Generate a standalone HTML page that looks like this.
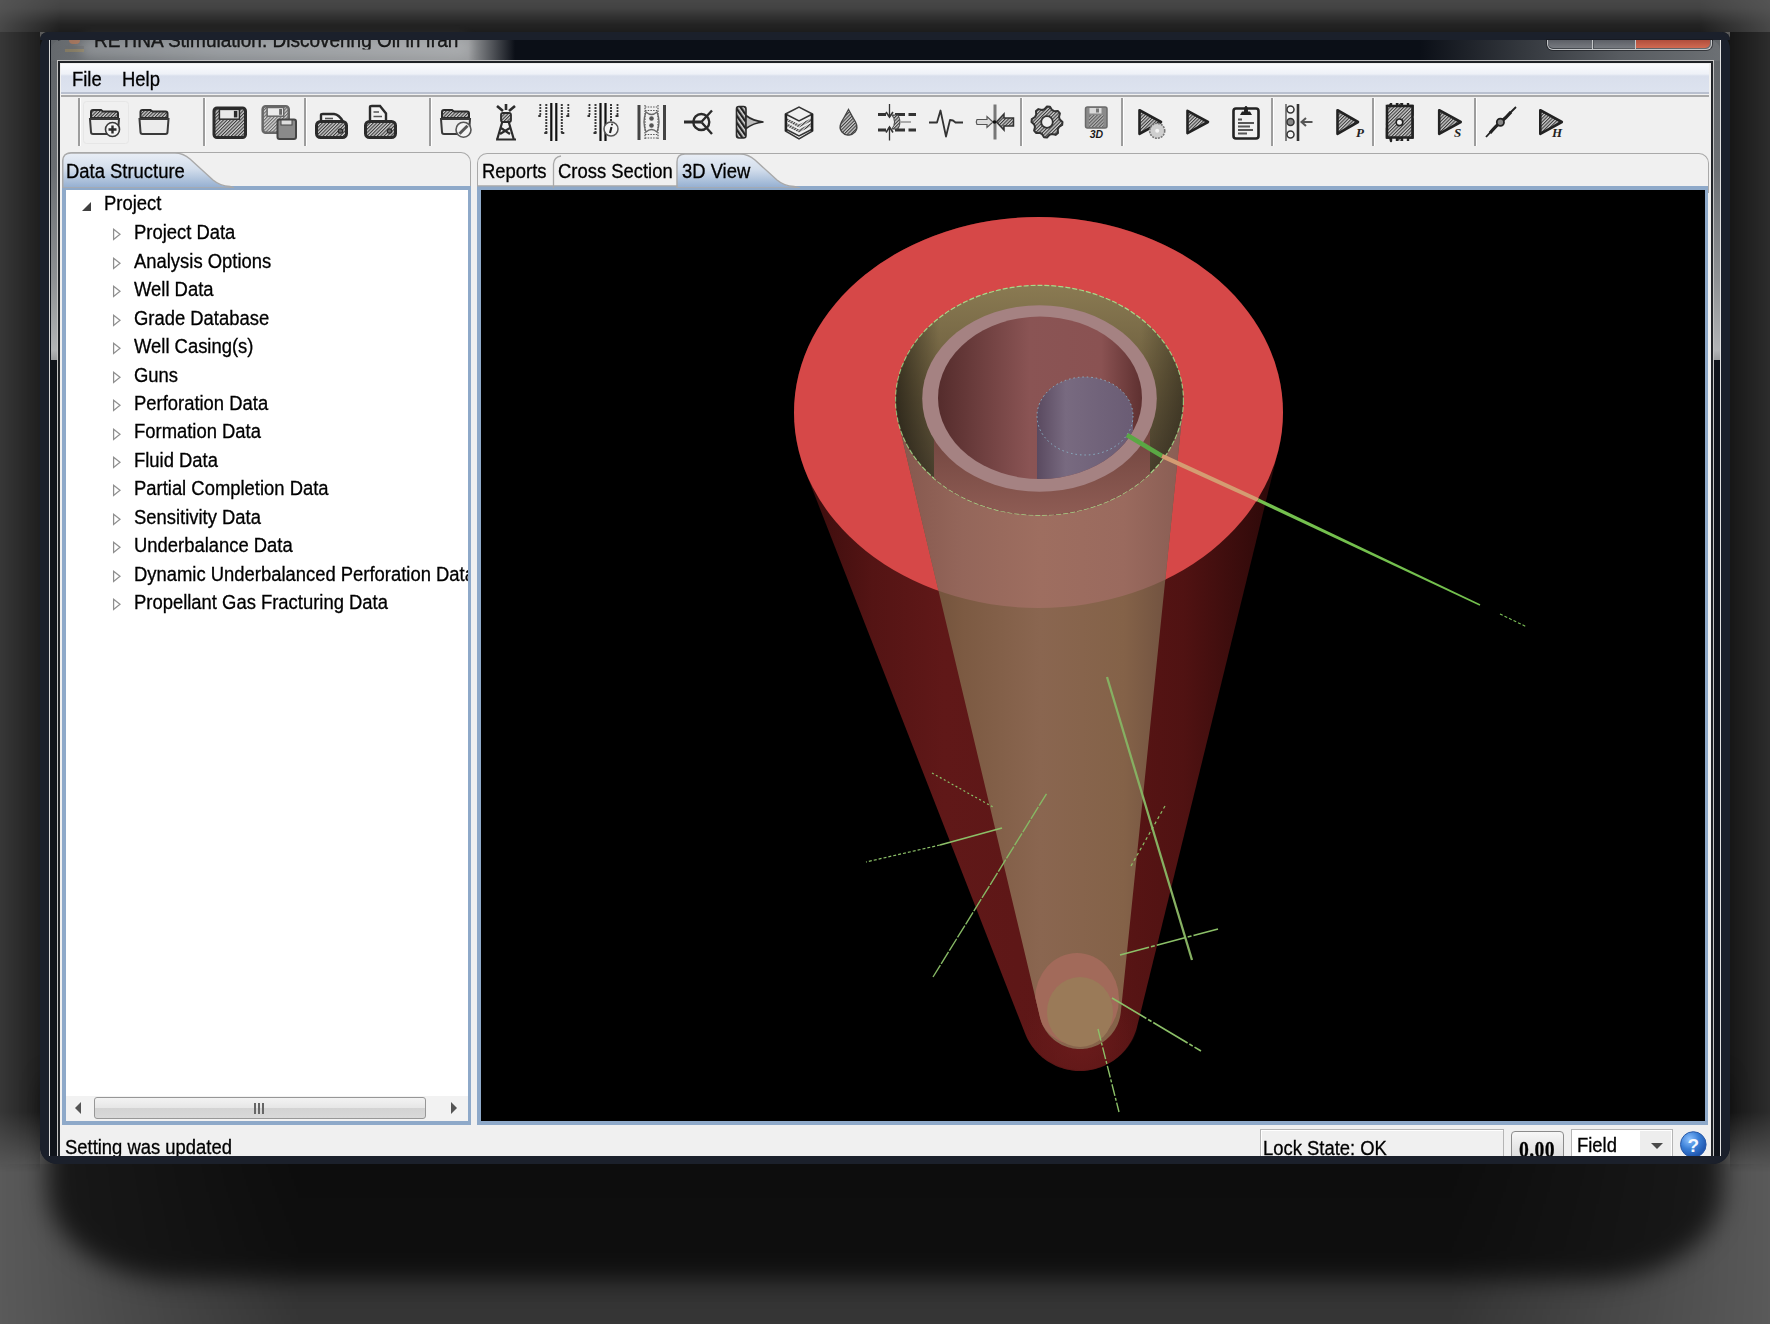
<!DOCTYPE html>
<html><head><meta charset="utf-8">
<style>
*{margin:0;padding:0;box-sizing:border-box}
html,body{width:1770px;height:1324px;overflow:hidden}
body{background:#5a5a5a;font-family:"Liberation Sans",sans-serif;position:relative}
.a{position:absolute}
#shadow{left:40px;top:32px;width:1690px;height:1132px;border-radius:8px 8px 20px 20px;background:#141414}
#shadow2{left:48px;top:1080px;width:1674px;height:200px;border-radius:0 0 130px 130px/0 0 90px 90px;background:rgba(0,0,0,.7);filter:blur(12px)}
#stop{left:0;top:0;width:1770px;height:32px;background:linear-gradient(180deg,rgba(0,0,0,.2) 0,rgba(0,0,0,.25) 8px,rgba(0,0,0,.6) 24px,rgba(0,0,0,.68) 32px);-webkit-mask-image:linear-gradient(90deg,rgba(0,0,0,.3) 0,#000 60px,#000 1700px,rgba(0,0,0,.3) 1770px)}
#sleft{left:0;top:32px;width:40px;height:1140px;background:linear-gradient(90deg,rgba(0,0,0,.38),rgba(0,0,0,.66));-webkit-mask-image:linear-gradient(180deg,#000 1080px,transparent 1140px)}
#sright{left:1730px;top:32px;width:40px;height:1140px;background:linear-gradient(270deg,rgba(0,0,0,.5),rgba(0,0,0,.75));-webkit-mask-image:linear-gradient(180deg,#000 1080px,transparent 1140px)}
#stail{left:0;top:1164px;width:1770px;height:160px;background:linear-gradient(180deg,rgba(0,0,0,.5),rgba(0,0,0,.4));-webkit-mask-image:linear-gradient(90deg,transparent 0,#000 300px,#000 1450px,transparent 1770px)}
#win{left:40px;top:32px;width:1690px;height:1132px;background:#1b202b;border-radius:17px;overflow:hidden}
#frame{left:49px;top:40px;width:1672px;height:1116px;background:#10141b;border-left:1.5px solid #d8d8d8;border-right:1.5px solid #e0e0e0}
#tbdark{left:460px;top:40px;width:1120px;height:21px;background:linear-gradient(90deg,rgba(11,15,23,0),#0b0f17 5%,#0b0f17 78%,rgba(11,15,23,0))}
#titleglow{left:80px;top:38px;width:390px;height:20px;border-radius:10px;background:rgba(200,202,205,.35);filter:blur(6px)}
#client{left:58px;top:61px;width:1655px;height:1095px;background:#f0f0f0;border:2px solid #202327;border-bottom:none;box-shadow:0 0 0 1px #c4c4c4}
.t{position:absolute;font-size:19.4px;color:#000;white-space:pre;line-height:1;transform:scaleX(.95);transform-origin:0 0;-webkit-text-stroke:.3px #000}
#menubar{left:61px;top:64px;width:1648px;height:30px;background:linear-gradient(180deg,#fbfcfe 0,#eef1f7 10px,#d9dfec 12px,#dde3ef 28px,#b9c0cf 28px,#b9c0cf 30px)}
#menuline{left:61px;top:95px;width:1648px;height:2px;background:#a9a9a9}
.sep{position:absolute;top:98px;width:2px;height:48px;background:#9d9d9d;box-shadow:1px 0 0 #fff}
.tabstrip{position:absolute;border:1.5px solid #a9a9a9;border-bottom:none;border-radius:10px 10px 0 0;background:#f0f0f0}
.blue{position:absolute;background:#8ea9c9}
#tree{left:65.5px;top:190px;width:402.5px;height:906px;background:#fff}
#hscroll{left:65.5px;top:1096px;width:402.5px;height:25px;background:#f2f2f2}
#thumb{left:94px;top:1097px;width:332px;height:22px;border:1px solid #979797;border-radius:3px;background:linear-gradient(180deg,#f3f3f3,#e6e6e6 50%,#d3d3d3 52%,#d9d9d9)}
#view{left:481px;top:190px;width:1224px;height:931px;background:#000;overflow:hidden}
.tri{position:absolute;width:0;height:0}
</style></head><body>
<div id="stop" class="a"></div><div id="sleft" class="a"></div><div id="sright" class="a"></div><div id="stail" class="a"></div><div id="shadow" class="a"></div><div id="shadow2" class="a"></div>
<div id="win" class="a"></div>
<div id="frame" class="a"></div>
<div class="a" style="left:50.5px;top:40px;width:7.5px;height:320px;background:linear-gradient(180deg,#606468,#6a6e72 40%,#8e9194 75%,#b2b4b6 97%,#9a9c9e)"></div>
<div class="a" style="left:1713px;top:40px;width:6.5px;height:320px;background:linear-gradient(180deg,#606468,#6a6e72 40%,#8e9194 75%,#b2b4b6 97%,#9a9c9e)"></div>
<div class="a" style="left:50.5px;top:40px;width:1669px;height:21px;background:linear-gradient(90deg,#65696d,#84888c 10%,#9a9c9e 25%,#0b0f17 27.8%,#0b0f17 82%,#33373d 88%,#575b60 94%,#6c7074);border-radius:10px 10px 0 0"></div>

<div id="titleglow" class="a"></div>
<div class="t" style="left:94px;top:29.5px;font-size:20px;color:#1a1a1a;clip-path:inset(10.5px 0 0 0)">RETINA Stimulation: Discovering Oil in Iran</div>
<div class="a" style="left:69px;top:40px;width:11px;height:4px;background:#d87a48;border-radius:0 0 4px 4px;opacity:.5"></div>
<div class="a" style="left:65px;top:46px;width:19px;height:3px;background:#6a6a6a;opacity:.35"></div>
<div class="a" style="left:65px;top:49px;width:19px;height:3px;background:#b8954a;opacity:.35"></div>
<div class="a" style="left:40px;top:32px;width:1690px;height:8px;background:#1b202b;border-radius:17px 17px 0 0"></div>
<!-- caption buttons -->
<div class="a" style="left:1546.5px;top:39.5px;width:165px;height:10px;border:1.3px solid #c4c6c8;border-top:none;border-radius:0 0 6px 6px;box-shadow:0 0 0 1px rgba(20,22,26,.6)"></div>
<div class="a" style="left:1548px;top:39.5px;width:44px;height:8px;background:linear-gradient(#5c5f66,#777a80);border-radius:0 0 0 5px"></div>
<div class="a" style="left:1593.5px;top:39.5px;width:41px;height:8px;background:linear-gradient(#5c5f66,#777a80)"></div>
<div class="a" style="left:1592.3px;top:39.5px;width:1.2px;height:9px;background:#c4c6c8"></div>
<div class="a" style="left:1634.5px;top:39.5px;width:1.2px;height:9px;background:#c4c6c8"></div>
<div class="a" style="left:1635.7px;top:39.5px;width:74.5px;height:8px;background:linear-gradient(#b04e3c,#d06a52);border-radius:0 0 5px 0"></div>
<div id="client" class="a"></div>
<div id="menubar" class="a"></div>
<div id="menuline" class="a"></div>
<div class="t" style="left:71.5px;top:69.8px">File</div>
<div class="t" style="left:122px;top:69.8px">Help</div>

<!-- toolbar separators -->
<div class="sep" style="left:78px"></div>
<div class="sep" style="left:203px"></div>
<div class="sep" style="left:304px"></div>
<div class="sep" style="left:429px"></div>
<div class="sep" style="left:1020px"></div>
<div class="sep" style="left:1121px"></div>
<div class="sep" style="left:1271px"></div>
<div class="sep" style="left:1372px"></div>
<div class="sep" style="left:1474px"></div>

<!--ICONS--><svg class="a" style="left:61px;top:97px" width="1648" height="55" viewBox="61 97 1648 55">
<defs>
<pattern id="hatch" patternUnits="userSpaceOnUse" width="2.4" height="2.4" patternTransform="rotate(45)"><rect width="2.4" height="2.4" fill="#cfcfcf"/><rect width="1.1" height="2.4" fill="#3a3a3a"/></pattern>
<pattern id="hatch2" patternUnits="userSpaceOnUse" width="4" height="4" patternTransform="rotate(-35)"><rect width="4" height="4" fill="#ddd"/><rect width="2.4" height="4" fill="#222"/></pattern>
</defs>
<rect x="83.5" y="101.5" width="45" height="42" rx="3" fill="none" stroke="#e6e6e6" stroke-width="1"/>
<path d="M91 118 L91 112 Q91 110 93 110 L101 110 L103 111.5 L116 111.5 Q118 111.5 118 113.5 L118 118 Z" fill="url(#hatch)" stroke="#2b2b2b" stroke-width="2"/>
<path d="M90 119 L119 119 L118 132 Q118 134 116 134 L93 134 Q91 134 91 132 Z" fill="#ececec" stroke="#3a3a3a" stroke-width="2"/><circle cx="112.5" cy="129.5" r="7" fill="#f4f4f4" stroke="#3a3a3a" stroke-width="1.6"/><path d="M108.5 129.5 H116.5 M112.5 125.5 V133.5" stroke="#2b2b2b" stroke-width="2.4"/>
<path d="M140.5 118 L140.5 112 Q140.5 110 142.5 110 L150.5 110 L152.5 111.5 L165.5 111.5 Q167.5 111.5 167.5 113.5 L167.5 118 Z" fill="url(#hatch)" stroke="#2b2b2b" stroke-width="2"/>
<path d="M139.5 119 L168.5 119 L167.5 132 Q167.5 134 165.5 134 L142.5 134 Q140.5 134 140.5 132 Z" fill="#ececec" stroke="#3a3a3a" stroke-width="2"/>
<rect x="214.0" y="107.9" width="31.5" height="29.6" rx="3" fill="url(#hatch)" stroke="#2b2b2b" stroke-width="3"/>
<rect x="219.4" y="109.4" width="20.009999999999998" height="9.78" fill="#e8e8e8" stroke="#2b2b2b" stroke-width="1.5"/>
<rect x="233.89" y="110.9" width="3.45" height="6.5200000000000005" fill="#2b2b2b"/>
<g opacity=".75"><rect x="262.65" y="106.25" width="26.1" height="26.5" rx="3" fill="url(#hatch)" stroke="#3a3a3a" stroke-width="2.5"/>
<rect x="267.12" y="107.5" width="16.588" height="8.7" fill="#e8e8e8" stroke="#3a3a3a" stroke-width="1.5"/>
<rect x="279.13199999999995" y="109.0" width="2.8600000000000003" height="5.800000000000001" fill="#3a3a3a"/></g>
<rect x="277.5" y="119.5" width="18.5" height="19.5" rx="2" fill="#8a8a8a" stroke="#444" stroke-width="2"/><rect x="281" y="120" width="11" height="5" fill="#ddd" stroke="#444" stroke-width="1"/>
<path d="M321 121.5 L321 115 Q321 114 323 114 L334 114 Q339 114.5 343 121.5 Z" fill="#f2f2f2" stroke="#2b2b2b" stroke-width="2.4"/><path d="M325 118.5 H333" stroke="#555" stroke-width="1.6"/><rect x="316.5" y="121.5" width="30" height="16" rx="4" fill="url(#hatch)" stroke="#2b2b2b" stroke-width="3"/><circle cx="340.5" cy="131" r="2.2" fill="#666" stroke="#2b2b2b" stroke-width="1.2"/>
<path d="M370 121.5 L370 107 Q370 106 372 106 L380 106 L386 113.5 L386 121.5 Z" fill="#f2f2f2" stroke="#2b2b2b" stroke-width="2.4"/><path d="M373.5 112 H379 M373.5 116.5 H382" stroke="#555" stroke-width="1.6"/><rect x="365.5" y="121.5" width="30" height="16" rx="4" fill="url(#hatch)" stroke="#2b2b2b" stroke-width="3"/><circle cx="389.5" cy="131" r="2.2" fill="#666" stroke="#2b2b2b" stroke-width="1.2"/>
<path d="M442 118 L442 112 Q442 110 444 110 L452 110 L454 111.5 L467 111.5 Q469 111.5 469 113.5 L469 118 Z" fill="url(#hatch)" stroke="#2b2b2b" stroke-width="2"/>
<path d="M441 119 L470 119 L469 132 Q469 134 467 134 L444 134 Q442 134 442 132 Z" fill="#ececec" stroke="#3a3a3a" stroke-width="2"/><circle cx="463.5" cy="129.7" r="7.5" fill="#f4f4f4" stroke="#555" stroke-width="1.6"/><path d="M459.5 133.7 L467.5 125.69999999999999" stroke="#555" stroke-width="3"/>
<path d="M497 140 L504 116 M514 140 L507 116 M501 128 L510 134 M510 128 L500 134 M496 139.5 H516" stroke="#2b2b2b" stroke-width="2.2" fill="none"/>
<rect x="501" y="113" width="10" height="9" rx="2" fill="url(#hatch)" stroke="#2b2b2b" stroke-width="1.8"/>
<path d="M503 111 L497 106 M506 110 L506 104 M509 111 L515 106" stroke="#2b2b2b" stroke-width="2.6"/>
<path d="M551.3 103 V141 M556.3 103 V141" stroke="#111" stroke-width="2.2"/><path d="M546.3 104 V134 M561.8 104 V134" stroke="#3a3a3a" stroke-width="2" stroke-dasharray="2 1"/><path d="M540.3 104 V116 M568.3 104 V116" stroke="#3a3a3a" stroke-width="1.8" stroke-dasharray="2 1"/><path d="M538.3 116 L540.8 116 M566.3 116 L569.3 116 M544.3 133 L547.3 133 M561.3 133 L564.3 133" stroke="#333" stroke-width="2"/>
<path d="M600.5 103 V141 M605.5 103 V141" stroke="#111" stroke-width="2.2"/><path d="M595.5 104 V134 M611.0 104 V134" stroke="#3a3a3a" stroke-width="2" stroke-dasharray="2 1"/><path d="M589.5 104 V116 M617.5 104 V116" stroke="#3a3a3a" stroke-width="1.8" stroke-dasharray="2 1"/><path d="M587.5 116 L590.0 116 M615.5 116 L618.5 116 M593.5 133 L596.5 133 M610.5 133 L613.5 133" stroke="#333" stroke-width="2"/><circle cx="611" cy="129" r="7" fill="#f6f6f6" stroke="#555" stroke-width="1.5"/><path d="M611.5 127 L610 133" stroke="#222" stroke-width="2"/><circle cx="612" cy="124.5" r="1" fill="#222"/>
<path d="M639 105 V140 M664.5 105 V140" stroke="#444" stroke-width="3"/>
<path d="M645 105 V140 M658 105 V140" stroke="#555" stroke-width="1.2" stroke-dasharray="1.5 1.2"/>
<path d="M645 107 H658 M645 110.5 H658 M645 134.5 H658 M645 138 H658" stroke="#555" stroke-width="1.2" stroke-dasharray="1.5 1.2"/>
<path d="M646 112 Q651.5 117 657 112 Q661 122 657 132 Q651.5 127 646 132 Q642 122 646 112 Z" fill="none" stroke="#666" stroke-width="1.3"/>
<circle cx="651.5" cy="118.5" r="2.3" fill="#555"/><circle cx="651.5" cy="125.5" r="2.3" fill="#555"/>
<path d="M684 122 H701" stroke="#2b2b2b" stroke-width="3"/><circle cx="701.3" cy="122" r="8" fill="none" stroke="#2b2b2b" stroke-width="2.4"/><path d="M701.3 122 L712 110.5 M701.3 122 L712 134" stroke="#2b2b2b" stroke-width="2.4"/>
<rect x="736.5" y="106.5" width="9.5" height="31.5" rx="2.5" fill="url(#hatch2)" stroke="#2b2b2b" stroke-width="1.6"/><path d="M746 115.5 Q753 121 763.5 122 Q753 123 746 128.5 Z" fill="#bdbdbd" stroke="#2b2b2b" stroke-width="1.6"/>
<path d="M785.5 114 L799 107 L812.5 114 L812.5 131 L799 139 L785.5 131 Z" fill="#f0f0f0" stroke="#333" stroke-width="1.5"/>
<path d="M785.5 114 L799 121 L812.5 114 M785.5 119 L799 126 L812.5 119 M785.5 124 L799 131 L812.5 124 M785.5 129 L799 136 L812.5 129" fill="none" stroke="#333" stroke-width="1.5"/>
<path d="M786.5 118 L799 124.5 L811.5 118 L811.5 121 L799 127.5 L786.5 121 Z M786.5 123 L799 129.5 L811.5 123 L811.5 126 L799 132.5 L786.5 126 Z" fill="url(#hatch)"/>
<path d="M786 114 V131 M812 114 V131" stroke="#222" stroke-width="2.4"/>
<path d="M848.5 109.5 Q852 116 855.5 122 Q858.5 128 855 132 Q851.5 135.5 848.5 135 Q845 135.5 842 132 Q838.5 128 841.5 122 Q845 116 848.5 109.5 Z" fill="url(#hatch)" stroke="#444" stroke-width="1.4"/>
<path d="M878 114.5 H886 M895 114.5 H905 M908.5 114.5 H916 M878 130 H886 M895 130 H905 M908.5 130 H916" stroke="#333" stroke-width="2.8"/>
<path d="M889.5 104 V117 M889.5 127 V140.5" stroke="#333" stroke-width="1.3"/>
<path d="M886 112 L889.5 117 L893 112 M886 132.5 L889.5 127 L893 132.5" fill="none" stroke="#333" stroke-width="1.6"/>
<path d="M892 115 Q897 122 892 129 L898 129 Q902 122 898 115 Z" fill="url(#hatch)" stroke="#444" stroke-width="1"/>
<path d="M901 122 H911" stroke="#aaa" stroke-width="2"/>
<polyline points="929,122.5 937,122.5 940.5,110.5 946,136.5 950,120 953,120.5 955.5,122.5 963,122.5" fill="none" stroke="#333" stroke-width="1.8" stroke-linejoin="round"/>
<rect x="993.5" y="104.5" width="3" height="35" fill="#777"/>
<path d="M977 119.5 H987 L987 116.5 L993 122 L987 127.5 L987 124.5 H977 Q975.5 122 977 119.5 Z" fill="#ddd" stroke="#555" stroke-width="1.2"/>
<path d="M1013.5 118 H1004 L1004 114 L996.5 122 L1004 130 L1004 126 H1013.5 Z" fill="url(#hatch)" stroke="#333" stroke-width="1.5"/>
<circle cx="994.5" cy="122" r="1.8" fill="#111"/>
<path d="M1047.0 106.5 L1050.0 106.8 L1052.0 110.0 L1054.2 111.2 L1058.0 111.0 L1059.9 113.4 L1059.0 117.0 L1059.8 119.5 L1062.5 122.0 L1062.2 125.0 L1059.0 127.0 L1057.8 129.2 L1058.0 133.0 L1055.6 134.9 L1052.0 134.0 L1049.5 134.8 L1047.0 137.5 L1044.0 137.2 L1042.0 134.0 L1039.8 132.8 L1036.0 133.0 L1034.1 130.6 L1035.0 127.0 L1034.2 124.5 L1031.5 122.0 L1031.8 119.0 L1035.0 117.0 L1036.2 114.8 L1036.0 111.0 L1038.4 109.1 L1042.0 110.0 L1044.5 109.2Z" fill="url(#hatch)" stroke="#333" stroke-width="2" stroke-linejoin="round"/><circle cx="1047" cy="122" r="5.8" fill="#f0f0f0" stroke="#333" stroke-width="1.8"/>
<rect x="1085.5" y="107" width="21.5" height="21" rx="2" fill="#8a8a8a" stroke="#6a6a6a" stroke-width="1.5"/><rect x="1089" y="115" width="14.5" height="12" fill="url(#hatch)" opacity=".6"/><rect x="1089.5" y="108" width="12" height="5.5" fill="#dadada"/><rect x="1096" y="108.5" width="3" height="4" fill="#777"/><text x="1096.5" y="137.8" font-family="Liberation Sans" font-weight="bold" font-style="italic" font-size="10.5" text-anchor="middle" fill="#1a1a1a">3D</text>
<path d="M1139.5 110.2 L1161 122.0 L1139.5 133.8 Z" fill="url(#hatch)" stroke="#222" stroke-width="2.6" stroke-linejoin="round"/><circle cx="1157.2" cy="130.8" r="7.5" fill="#cfcfcf" stroke="#777" stroke-width="1.6" stroke-dasharray="2 1"/><circle cx="1157.2" cy="130.8" r="2" fill="#f4f4f4"/>
<path d="M1187.5 110.8 L1208 122.0 L1187.5 133.2 Z" fill="url(#hatch)" stroke="#222" stroke-width="2.6" stroke-linejoin="round"/>
<rect x="1233.5" y="108.5" width="25" height="30" rx="2.5" fill="#f0f0f0" stroke="#222" stroke-width="2.6"/>
<path d="M1240 115 H1252 L1250 111.5 L1248 111.5 Q1248 106 1246 106 Q1244 106 1244 111.5 L1242 111.5 Z" fill="#222"/>
<path d="M1238 119.5 H1242 M1238 123 H1254 M1238 126.5 H1250 M1238 130 H1253 M1238 133.5 H1247" stroke="#555" stroke-width="1.8"/>
<path d="M1298 104 V141" stroke="#333" stroke-width="2.6"/>
<path d="M1286 104 V141" stroke="#444" stroke-width="1.3"/>
<circle cx="1290.5" cy="109.5" r="3.5" fill="#f4f4f4" stroke="#333" stroke-width="1.5"/><circle cx="1290.5" cy="122" r="3.5" fill="#888" stroke="#333" stroke-width="1.5"/><circle cx="1290.5" cy="134.5" r="3.5" fill="#f4f4f4" stroke="#333" stroke-width="1.5"/>
<path d="M1312.5 122 H1302 M1306 118 L1301.5 122 L1306 126" fill="none" stroke="#555" stroke-width="2"/>
<path d="M1337.5 110.2 L1358 122.0 L1337.5 133.8 Z" fill="url(#hatch)" stroke="#222" stroke-width="2.6" stroke-linejoin="round"/><text x="1356" y="137" font-family="Liberation Serif" font-weight="bold" font-style="italic" font-size="13" fill="#222">P</text>
<path d="M1387 106 H1391 L1391 103 M1397 103 V106 H1402 V103 M1408 103 V106 H1412.5 V115 H1409 V119 H1412.5 V137.5 H1408 V141 M1402 141 V137.5 H1397 V141 M1391 141 V137.5 H1387 V128 H1390 V124 H1387 Z" fill="url(#hatch)" stroke="#222" stroke-width="2.4" stroke-linejoin="round"/>
<path d="M1387 106 H1412.5 V137.5 H1387 Z" fill="url(#hatch)" stroke="#222" stroke-width="2.6"/>
<circle cx="1399.5" cy="122.3" r="3.3" fill="#f0f0f0" stroke="#222" stroke-width="1.6"/>
<path d="M1439.2 110.2 L1460.7 122.0 L1439.2 133.8 Z" fill="url(#hatch)" stroke="#222" stroke-width="2.6" stroke-linejoin="round"/><text x="1454" y="137" font-family="Liberation Serif" font-weight="bold" font-style="italic" font-size="13" fill="#222">S</text>
<path d="M1486 137 Q1494 128 1500.4 122.3 Q1507 116 1516 107" fill="none" stroke="#222" stroke-width="1.8"/><path d="M1490 133 Q1496 126 1500.4 122.3 M1500.4 122.3 Q1506 118 1511 112" stroke="#222" stroke-width="3.2" fill="none"/><circle cx="1500.4" cy="122.3" r="3.6" fill="#888" stroke="#222" stroke-width="1.8"/>
<path d="M1540.3 110.2 L1561.8 122.0 L1540.3 133.8 Z" fill="url(#hatch)" stroke="#222" stroke-width="2.6" stroke-linejoin="round"/><text x="1552" y="137" font-family="Liberation Serif" font-weight="bold" font-style="italic" font-size="13" fill="#222">H</text>
</svg><!--/ICONS-->
<!-- left panel -->
<div class="tabstrip" style="left:62px;top:152px;width:409px;height:40px"></div>
<div class="blue" style="left:62px;top:186px;width:409px;height:939px"></div>
<svg class="a" style="left:62px;top:152px" width="180" height="36"><defs><linearGradient id="tabg" x1="0" x2="0" y1="0" y2="1"><stop offset="0" stop-color="#e9eef6"/><stop offset=".45" stop-color="#d3deec"/><stop offset="1" stop-color="#93aed0"/></linearGradient></defs><path d="M0.8 36 L0.8 9 Q0.8 1 9 1 L113 1 Q121 1 128 7 L151 28 Q158 34 168 34.5 L172 36 Z" fill="url(#tabg)" stroke="#a9a9a9" stroke-width="1.4"/></svg>
<div class="t" style="left:66px;top:162.2px">Data Structure</div>
<div id="tree" class="a"></div>
<div class="a" style="left:65.5px;top:190px;width:402.5px;height:906px;overflow:hidden">
<div class="t" style="left:38.0px;top:4.2px">Project</div>
<svg class="a" style="left:16.5px;top:11.5px" width="10" height="10"><path d="M9 0 L9 9 L0 9 Z" fill="#404040"/></svg>
<div class="t" style="left:68.0px;top:33.2px">Project Data</div>
<svg class="a" style="left:46.5px;top:37.3px" width="11" height="16"><path d="M1.6 2.2 L8 7.3 L1.6 12.4 Z" fill="none" stroke="#8f8f8f" stroke-width="1.25"/></svg>
<div class="t" style="left:68.0px;top:61.7px">Analysis Options</div>
<svg class="a" style="left:46.5px;top:65.7px" width="11" height="16"><path d="M1.6 2.2 L8 7.3 L1.6 12.4 Z" fill="none" stroke="#8f8f8f" stroke-width="1.25"/></svg>
<div class="t" style="left:68.0px;top:90.1px">Well Data</div>
<svg class="a" style="left:46.5px;top:94.2px" width="11" height="16"><path d="M1.6 2.2 L8 7.3 L1.6 12.4 Z" fill="none" stroke="#8f8f8f" stroke-width="1.25"/></svg>
<div class="t" style="left:68.0px;top:118.6px">Grade Database</div>
<svg class="a" style="left:46.5px;top:122.6px" width="11" height="16"><path d="M1.6 2.2 L8 7.3 L1.6 12.4 Z" fill="none" stroke="#8f8f8f" stroke-width="1.25"/></svg>
<div class="t" style="left:68.0px;top:147.0px">Well Casing(s)</div>
<svg class="a" style="left:46.5px;top:151.1px" width="11" height="16"><path d="M1.6 2.2 L8 7.3 L1.6 12.4 Z" fill="none" stroke="#8f8f8f" stroke-width="1.25"/></svg>
<div class="t" style="left:68.0px;top:175.5px">Guns</div>
<svg class="a" style="left:46.5px;top:179.6px" width="11" height="16"><path d="M1.6 2.2 L8 7.3 L1.6 12.4 Z" fill="none" stroke="#8f8f8f" stroke-width="1.25"/></svg>
<div class="t" style="left:68.0px;top:203.9px">Perforation Data</div>
<svg class="a" style="left:46.5px;top:208.0px" width="11" height="16"><path d="M1.6 2.2 L8 7.3 L1.6 12.4 Z" fill="none" stroke="#8f8f8f" stroke-width="1.25"/></svg>
<div class="t" style="left:68.0px;top:232.4px">Formation Data</div>
<svg class="a" style="left:46.5px;top:236.5px" width="11" height="16"><path d="M1.6 2.2 L8 7.3 L1.6 12.4 Z" fill="none" stroke="#8f8f8f" stroke-width="1.25"/></svg>
<div class="t" style="left:68.0px;top:260.8px">Fluid Data</div>
<svg class="a" style="left:46.5px;top:264.9px" width="11" height="16"><path d="M1.6 2.2 L8 7.3 L1.6 12.4 Z" fill="none" stroke="#8f8f8f" stroke-width="1.25"/></svg>
<div class="t" style="left:68.0px;top:289.3px">Partial Completion Data</div>
<svg class="a" style="left:46.5px;top:293.4px" width="11" height="16"><path d="M1.6 2.2 L8 7.3 L1.6 12.4 Z" fill="none" stroke="#8f8f8f" stroke-width="1.25"/></svg>
<div class="t" style="left:68.0px;top:317.7px">Sensitivity Data</div>
<svg class="a" style="left:46.5px;top:321.8px" width="11" height="16"><path d="M1.6 2.2 L8 7.3 L1.6 12.4 Z" fill="none" stroke="#8f8f8f" stroke-width="1.25"/></svg>
<div class="t" style="left:68.0px;top:346.2px">Underbalance Data</div>
<svg class="a" style="left:46.5px;top:350.3px" width="11" height="16"><path d="M1.6 2.2 L8 7.3 L1.6 12.4 Z" fill="none" stroke="#8f8f8f" stroke-width="1.25"/></svg>
<div class="t" style="left:68.0px;top:374.6px">Dynamic Underbalanced Perforation Data</div>
<svg class="a" style="left:46.5px;top:378.7px" width="11" height="16"><path d="M1.6 2.2 L8 7.3 L1.6 12.4 Z" fill="none" stroke="#8f8f8f" stroke-width="1.25"/></svg>
<div class="t" style="left:68.0px;top:403.1px">Propellant Gas Fracturing Data</div>
<svg class="a" style="left:46.5px;top:407.1px" width="11" height="16"><path d="M1.6 2.2 L8 7.3 L1.6 12.4 Z" fill="none" stroke="#8f8f8f" stroke-width="1.25"/></svg>
</div>

<div id="hscroll" class="a"></div>
<div id="thumb" class="a"></div>
<svg class="a" style="left:73px;top:1101px" width="10" height="14"><path d="M8 1 L8 13 L2 7 Z" fill="#555"/></svg>
<svg class="a" style="left:449px;top:1101px" width="10" height="14"><path d="M2 1 L2 13 L8 7 Z" fill="#555"/></svg>
<div class="a" style="left:254px;top:1103px;width:10px;height:11px;border-left:2px solid #666;border-right:2px solid #666"><div class="a" style="left:2px;top:0;width:2px;height:11px;background:#666"></div></div>


<!-- right panel -->
<div class="tabstrip" style="left:477px;top:153px;width:1232px;height:40px"></div>
<div class="blue" style="left:477px;top:186px;width:1231px;height:939px"></div>
<div id="view" class="a"></div>
<!--3D--><svg class="a" style="left:481px;top:190px" width="1224" height="931" viewBox="481 190 1224 931">
<defs>
<linearGradient id="gOuter" x1="800" x2="1280" y1="0" y2="0" gradientUnits="userSpaceOnUse"><stop offset="0" stop-color="#380c0c"/><stop offset=".15" stop-color="#541414"/><stop offset=".3" stop-color="#601818"/><stop offset=".6" stop-color="#5c1616"/><stop offset=".8" stop-color="#501212"/><stop offset="1" stop-color="#2a0808"/></linearGradient>
<linearGradient id="gTan" x1="900" x2="1180" y1="0" y2="0" gradientUnits="userSpaceOnUse"><stop offset="0" stop-color="#a07a66"/><stop offset=".5" stop-color="#b8907a"/><stop offset="1" stop-color="#a07e6a"/></linearGradient>
<linearGradient id="gOlive" x1="0" x2="0" y1="285" y2="515" gradientUnits="userSpaceOnUse"><stop offset="0" stop-color="#8a7a52"/><stop offset=".4" stop-color="#6c5e3e"/><stop offset=".8" stop-color="#4e4430"/><stop offset="1" stop-color="#4a4030"/></linearGradient>
<linearGradient id="gOliveH" x1="896" x2="1184" y1="0" y2="0" gradientUnits="userSpaceOnUse"><stop offset="0" stop-color="#000" stop-opacity=".5"/><stop offset=".15" stop-color="#000" stop-opacity="0"/><stop offset=".85" stop-color="#000" stop-opacity="0"/><stop offset="1" stop-color="#000" stop-opacity=".35"/></linearGradient>
<linearGradient id="gInner" x1="938" x2="1142" y1="0" y2="0" gradientUnits="userSpaceOnUse"><stop offset="0" stop-color="#552c2c"/><stop offset=".45" stop-color="#8a5454"/><stop offset=".8" stop-color="#8a5252"/><stop offset="1" stop-color="#5e3030"/></linearGradient>
<linearGradient id="gPurp" x1="1037" x2="1133" y1="0" y2="0" gradientUnits="userSpaceOnUse"><stop offset="0" stop-color="#5a4a60"/><stop offset=".3" stop-color="#786a80"/><stop offset="1" stop-color="#6a5c74"/></linearGradient>
<clipPath id="cFace"><ellipse cx="1038.5" cy="412.5" rx="244.5" ry="195.5"/></clipPath>
<clipPath id="cTan"><path d="M895.7 400.2 L895.8 396.2 L896.1 392.2 L896.5 388.2 L897.1 384.2 L897.9 380.2 L898.8 376.3 L900.0 372.4 L901.3 368.5 L902.7 364.7 L904.4 360.9 L906.2 357.2 L908.1 353.5 L910.3 349.8 L912.5 346.3 L915.0 342.8 L917.6 339.3 L920.3 335.9 L923.2 332.7 L926.2 329.5 L929.3 326.3 L932.6 323.3 L936.1 320.4 L939.6 317.5 L943.3 314.8 L947.1 312.2 L951.0 309.7 L955.0 307.2 L959.1 304.9 L963.3 302.8 L967.6 300.7 L972.0 298.7 L976.5 296.9 L981.0 295.2 L985.6 293.7 L990.3 292.2 L995.1 290.9 L1004.7 288.7 L1009.6 287.8 L1014.5 287.0 L1019.5 286.4 L1024.5 285.9 L1029.5 285.6 L1034.5 285.4 L1039.5 285.3 L1044.5 285.4 L1049.5 285.6 L1054.5 285.9 L1059.5 286.4 L1064.5 287.0 L1069.4 287.8 L1074.3 288.7 L1083.9 290.9 L1088.7 292.2 L1093.4 293.7 L1098.0 295.2 L1102.5 296.9 L1107.0 298.7 L1111.4 300.7 L1115.7 302.8 L1119.9 304.9 L1124.0 307.2 L1128.0 309.7 L1131.9 312.2 L1135.7 314.8 L1139.4 317.5 L1142.9 320.4 L1146.4 323.3 L1149.7 326.3 L1152.8 329.5 L1155.8 332.7 L1158.7 335.9 L1161.4 339.3 L1164.0 342.7 L1166.5 346.3 L1168.7 349.8 L1170.9 353.5 L1172.8 357.2 L1174.6 360.9 L1176.3 364.7 L1177.7 368.5 L1179.0 372.4 L1180.2 376.3 L1181.1 380.2 L1181.9 384.2 L1182.5 388.2 L1182.9 392.2 L1183.2 396.2 L1183.3 400.2 L1183.2 404.2 L1182.9 408.2 L1182.5 412.2 L1120.8 1012.3 L1120.4 1015.1 L1119.8 1017.9 L1119.4 1019.3 L1119.0 1020.7 L1118.0 1023.4 L1117.5 1024.7 L1116.9 1026.0 L1115.5 1028.5 L1114.8 1029.7 L1114.0 1030.9 L1113.2 1032.1 L1111.4 1034.4 L1110.5 1035.4 L1109.5 1036.5 L1108.5 1037.5 L1107.4 1038.5 L1106.4 1039.4 L1104.1 1041.2 L1102.9 1042.0 L1101.7 1042.8 L1100.5 1043.5 L1098.0 1044.9 L1096.7 1045.5 L1095.4 1046.0 L1092.7 1047.0 L1091.3 1047.4 L1089.9 1047.8 L1087.1 1048.4 L1084.3 1048.8 L1082.9 1048.9 L1081.4 1049.0 L1078.6 1049.0 L1077.1 1048.9 L1075.7 1048.8 L1072.9 1048.4 L1070.1 1047.8 L1068.7 1047.4 L1067.3 1047.0 L1064.6 1046.0 L1063.3 1045.5 L1062.0 1044.9 L1059.5 1043.5 L1058.3 1042.8 L1057.1 1042.0 L1055.9 1041.2 L1053.6 1039.4 L1052.6 1038.5 L1051.5 1037.5 L1050.5 1036.5 L1049.5 1035.4 L1048.6 1034.4 L1046.8 1032.1 L1046.0 1030.9 L1045.2 1029.7 L1044.5 1028.5 L1043.1 1026.0 L1042.5 1024.7 L1042.0 1023.4 L1041.0 1020.7 L1040.6 1019.3 L1040.2 1017.9 L898.8 424.1 L897.9 420.2 L897.1 416.2 L896.5 412.2 L896.1 408.2 L895.8 404.2Z"/></clipPath>
<linearGradient id="gTanLo" x1="900" x2="1180" y1="0" y2="0" gradientUnits="userSpaceOnUse"><stop offset="0" stop-color="#684a34"/><stop offset=".22" stop-color="#7c5a42"/><stop offset=".5" stop-color="#8a6650"/><stop offset=".8" stop-color="#846248"/><stop offset="1" stop-color="#6c4e3e"/></linearGradient>
<linearGradient id="gTanHi" x1="900" x2="1180" y1="0" y2="0" gradientUnits="userSpaceOnUse"><stop offset="0" stop-color="#86584e"/><stop offset=".22" stop-color="#94665a"/><stop offset=".5" stop-color="#9e6e60"/><stop offset=".8" stop-color="#9a6a5e"/><stop offset="1" stop-color="#8a5e54"/></linearGradient>
<radialGradient id="gBot" cx="1081" cy="1040" r="60" gradientUnits="userSpaceOnUse"><stop offset="0" stop-color="#6c1c1c" stop-opacity=".9"/><stop offset="1" stop-color="#6c1c1c" stop-opacity="0"/></radialGradient>
<clipPath id="cOlive"><ellipse cx="1039.5" cy="400.2" rx="143.8" ry="114.9"/></clipPath>
<linearGradient id="gFront" x1="0" x2="0" y1="420" y2="515" gradientUnits="userSpaceOnUse"><stop offset="0" stop-color="#6e423c"/><stop offset="1" stop-color="#8e5c54"/></linearGradient>
<clipPath id="cInner"><ellipse cx="1040" cy="397.8" rx="102" ry="81.2"/></clipPath>
</defs>
<path d="M794.0 412.5 L794.1 405.7 L794.6 398.9 L795.3 392.1 L796.4 385.3 L797.7 378.6 L799.3 371.9 L801.3 365.2 L803.5 358.6 L806.0 352.1 L808.7 345.6 L811.8 339.3 L815.1 333.0 L818.7 326.8 L822.6 320.7 L826.8 314.8 L831.2 308.9 L835.8 303.2 L840.7 297.6 L845.8 292.1 L851.2 286.8 L856.8 281.7 L862.6 276.7 L868.7 271.9 L874.9 267.2 L881.3 262.7 L888.0 258.4 L894.8 254.3 L901.8 250.4 L908.9 246.7 L916.2 243.2 L923.7 239.9 L931.3 236.8 L939.1 233.9 L946.9 231.2 L954.9 228.8 L962.9 226.6 L971.1 224.6 L979.4 222.8 L987.7 221.3 L996.0 220.0 L1004.5 218.9 L1012.9 218.1 L1021.4 217.5 L1030.0 217.1 L1038.5 217.0 L1047.0 217.1 L1055.6 217.5 L1064.1 218.1 L1072.5 218.9 L1081.0 220.0 L1089.3 221.3 L1097.6 222.8 L1105.9 224.6 L1114.1 226.6 L1122.1 228.8 L1130.1 231.2 L1137.9 233.9 L1145.7 236.8 L1153.3 239.9 L1160.8 243.2 L1168.1 246.7 L1175.2 250.4 L1182.2 254.3 L1189.0 258.4 L1195.7 262.7 L1202.1 267.2 L1208.3 271.9 L1214.4 276.7 L1220.2 281.7 L1225.8 286.8 L1231.2 292.1 L1236.3 297.6 L1241.2 303.2 L1245.8 308.9 L1250.2 314.7 L1254.4 320.7 L1258.3 326.8 L1261.9 333.0 L1265.2 339.3 L1268.3 345.6 L1271.0 352.1 L1273.5 358.6 L1275.7 365.2 L1277.7 371.9 L1279.3 378.6 L1280.6 385.3 L1281.7 392.1 L1282.4 398.9 L1282.9 405.7 L1283.0 412.5 L1282.9 419.3 L1282.4 426.1 L1281.7 432.9 L1280.6 439.7 L1279.3 446.4 L1277.7 453.1 L1137.7 1024.3 L1136.7 1028.3 L1136.1 1030.2 L1135.4 1032.2 L1134.7 1034.1 L1133.9 1036.0 L1133.0 1037.9 L1132.1 1039.7 L1131.1 1041.5 L1130.0 1043.3 L1128.9 1045.0 L1127.7 1046.7 L1126.5 1048.3 L1125.2 1049.9 L1123.8 1051.5 L1122.4 1053.0 L1121.0 1054.4 L1119.5 1055.8 L1117.9 1057.2 L1116.3 1058.5 L1114.7 1059.7 L1113.0 1060.9 L1111.3 1062.0 L1109.5 1063.1 L1107.7 1064.1 L1105.9 1065.0 L1104.0 1065.9 L1102.1 1066.7 L1100.2 1067.4 L1098.2 1068.1 L1096.3 1068.7 L1092.3 1069.7 L1090.2 1070.1 L1088.2 1070.4 L1086.2 1070.7 L1084.1 1070.9 L1082.1 1071.0 L1077.9 1071.0 L1075.9 1070.9 L1073.8 1070.7 L1071.8 1070.4 L1069.8 1070.1 L1067.7 1069.7 L1063.7 1068.7 L1061.8 1068.1 L1059.8 1067.4 L1057.9 1066.7 L1056.0 1065.9 L1054.1 1065.0 L1052.3 1064.1 L1050.5 1063.1 L1048.7 1062.0 L1047.0 1060.9 L1045.3 1059.7 L1043.7 1058.5 L1042.1 1057.2 L1040.5 1055.8 L1039.0 1054.4 L1037.6 1053.0 L1036.2 1051.5 L1034.8 1049.9 L1033.5 1048.3 L1032.3 1046.7 L1031.1 1045.0 L1030.0 1043.3 L1028.9 1041.5 L1027.9 1039.7 L1027.0 1037.9 L1026.1 1036.0 L1025.3 1034.1 L806.0 472.9 L803.5 466.4 L801.3 459.8 L799.3 453.1 L797.7 446.4 L796.4 439.7 L795.3 432.9 L794.6 426.1 L794.1 419.3Z" fill="url(#gOuter)"/>
<ellipse cx="1081" cy="1010" rx="60" ry="60" fill="url(#gBot)"/>
<ellipse cx="1038.5" cy="412.5" rx="244.5" ry="195.5" fill="#d64848"/>
<path d="M895.7 400.2 L895.8 396.2 L896.1 392.2 L896.5 388.2 L897.1 384.2 L897.9 380.2 L898.8 376.3 L900.0 372.4 L901.3 368.5 L902.7 364.7 L904.4 360.9 L906.2 357.2 L908.1 353.5 L910.3 349.8 L912.5 346.3 L915.0 342.8 L917.6 339.3 L920.3 335.9 L923.2 332.7 L926.2 329.5 L929.3 326.3 L932.6 323.3 L936.1 320.4 L939.6 317.5 L943.3 314.8 L947.1 312.2 L951.0 309.7 L955.0 307.2 L959.1 304.9 L963.3 302.8 L967.6 300.7 L972.0 298.7 L976.5 296.9 L981.0 295.2 L985.6 293.7 L990.3 292.2 L995.1 290.9 L1004.7 288.7 L1009.6 287.8 L1014.5 287.0 L1019.5 286.4 L1024.5 285.9 L1029.5 285.6 L1034.5 285.4 L1039.5 285.3 L1044.5 285.4 L1049.5 285.6 L1054.5 285.9 L1059.5 286.4 L1064.5 287.0 L1069.4 287.8 L1074.3 288.7 L1083.9 290.9 L1088.7 292.2 L1093.4 293.7 L1098.0 295.2 L1102.5 296.9 L1107.0 298.7 L1111.4 300.7 L1115.7 302.8 L1119.9 304.9 L1124.0 307.2 L1128.0 309.7 L1131.9 312.2 L1135.7 314.8 L1139.4 317.5 L1142.9 320.4 L1146.4 323.3 L1149.7 326.3 L1152.8 329.5 L1155.8 332.7 L1158.7 335.9 L1161.4 339.3 L1164.0 342.7 L1166.5 346.3 L1168.7 349.8 L1170.9 353.5 L1172.8 357.2 L1174.6 360.9 L1176.3 364.7 L1177.7 368.5 L1179.0 372.4 L1180.2 376.3 L1181.1 380.2 L1181.9 384.2 L1182.5 388.2 L1182.9 392.2 L1183.2 396.2 L1183.3 400.2 L1183.2 404.2 L1182.9 408.2 L1182.5 412.2 L1120.8 1012.3 L1120.4 1015.1 L1119.8 1017.9 L1119.4 1019.3 L1119.0 1020.7 L1118.0 1023.4 L1117.5 1024.7 L1116.9 1026.0 L1115.5 1028.5 L1114.8 1029.7 L1114.0 1030.9 L1113.2 1032.1 L1111.4 1034.4 L1110.5 1035.4 L1109.5 1036.5 L1108.5 1037.5 L1107.4 1038.5 L1106.4 1039.4 L1104.1 1041.2 L1102.9 1042.0 L1101.7 1042.8 L1100.5 1043.5 L1098.0 1044.9 L1096.7 1045.5 L1095.4 1046.0 L1092.7 1047.0 L1091.3 1047.4 L1089.9 1047.8 L1087.1 1048.4 L1084.3 1048.8 L1082.9 1048.9 L1081.4 1049.0 L1078.6 1049.0 L1077.1 1048.9 L1075.7 1048.8 L1072.9 1048.4 L1070.1 1047.8 L1068.7 1047.4 L1067.3 1047.0 L1064.6 1046.0 L1063.3 1045.5 L1062.0 1044.9 L1059.5 1043.5 L1058.3 1042.8 L1057.1 1042.0 L1055.9 1041.2 L1053.6 1039.4 L1052.6 1038.5 L1051.5 1037.5 L1050.5 1036.5 L1049.5 1035.4 L1048.6 1034.4 L1046.8 1032.1 L1046.0 1030.9 L1045.2 1029.7 L1044.5 1028.5 L1043.1 1026.0 L1042.5 1024.7 L1042.0 1023.4 L1041.0 1020.7 L1040.6 1019.3 L1040.2 1017.9 L898.8 424.1 L897.9 420.2 L897.1 416.2 L896.5 412.2 L896.1 408.2 L895.8 404.2Z" fill="url(#gTanLo)"/>
<g clip-path="url(#cFace)"><path d="M895.7 400.2 L895.8 396.2 L896.1 392.2 L896.5 388.2 L897.1 384.2 L897.9 380.2 L898.8 376.3 L900.0 372.4 L901.3 368.5 L902.7 364.7 L904.4 360.9 L906.2 357.2 L908.1 353.5 L910.3 349.8 L912.5 346.3 L915.0 342.8 L917.6 339.3 L920.3 335.9 L923.2 332.7 L926.2 329.5 L929.3 326.3 L932.6 323.3 L936.1 320.4 L939.6 317.5 L943.3 314.8 L947.1 312.2 L951.0 309.7 L955.0 307.2 L959.1 304.9 L963.3 302.8 L967.6 300.7 L972.0 298.7 L976.5 296.9 L981.0 295.2 L985.6 293.7 L990.3 292.2 L995.1 290.9 L1004.7 288.7 L1009.6 287.8 L1014.5 287.0 L1019.5 286.4 L1024.5 285.9 L1029.5 285.6 L1034.5 285.4 L1039.5 285.3 L1044.5 285.4 L1049.5 285.6 L1054.5 285.9 L1059.5 286.4 L1064.5 287.0 L1069.4 287.8 L1074.3 288.7 L1083.9 290.9 L1088.7 292.2 L1093.4 293.7 L1098.0 295.2 L1102.5 296.9 L1107.0 298.7 L1111.4 300.7 L1115.7 302.8 L1119.9 304.9 L1124.0 307.2 L1128.0 309.7 L1131.9 312.2 L1135.7 314.8 L1139.4 317.5 L1142.9 320.4 L1146.4 323.3 L1149.7 326.3 L1152.8 329.5 L1155.8 332.7 L1158.7 335.9 L1161.4 339.3 L1164.0 342.7 L1166.5 346.3 L1168.7 349.8 L1170.9 353.5 L1172.8 357.2 L1174.6 360.9 L1176.3 364.7 L1177.7 368.5 L1179.0 372.4 L1180.2 376.3 L1181.1 380.2 L1181.9 384.2 L1182.5 388.2 L1182.9 392.2 L1183.2 396.2 L1183.3 400.2 L1183.2 404.2 L1182.9 408.2 L1182.5 412.2 L1120.8 1012.3 L1120.4 1015.1 L1119.8 1017.9 L1119.4 1019.3 L1119.0 1020.7 L1118.0 1023.4 L1117.5 1024.7 L1116.9 1026.0 L1115.5 1028.5 L1114.8 1029.7 L1114.0 1030.9 L1113.2 1032.1 L1111.4 1034.4 L1110.5 1035.4 L1109.5 1036.5 L1108.5 1037.5 L1107.4 1038.5 L1106.4 1039.4 L1104.1 1041.2 L1102.9 1042.0 L1101.7 1042.8 L1100.5 1043.5 L1098.0 1044.9 L1096.7 1045.5 L1095.4 1046.0 L1092.7 1047.0 L1091.3 1047.4 L1089.9 1047.8 L1087.1 1048.4 L1084.3 1048.8 L1082.9 1048.9 L1081.4 1049.0 L1078.6 1049.0 L1077.1 1048.9 L1075.7 1048.8 L1072.9 1048.4 L1070.1 1047.8 L1068.7 1047.4 L1067.3 1047.0 L1064.6 1046.0 L1063.3 1045.5 L1062.0 1044.9 L1059.5 1043.5 L1058.3 1042.8 L1057.1 1042.0 L1055.9 1041.2 L1053.6 1039.4 L1052.6 1038.5 L1051.5 1037.5 L1050.5 1036.5 L1049.5 1035.4 L1048.6 1034.4 L1046.8 1032.1 L1046.0 1030.9 L1045.2 1029.7 L1044.5 1028.5 L1043.1 1026.0 L1042.5 1024.7 L1042.0 1023.4 L1041.0 1020.7 L1040.6 1019.3 L1040.2 1017.9 L898.8 424.1 L897.9 420.2 L897.1 416.2 L896.5 412.2 L896.1 408.2 L895.8 404.2Z" fill="url(#gTanHi)"/></g>
<g clip-path="url(#cTan)"><ellipse cx="1077" cy="999" rx="42" ry="46" fill="#a26a5a"/></g>
<ellipse cx="1080" cy="1012" rx="33" ry="35" fill="#9a7a58"/>
<ellipse cx="1039.5" cy="400.2" rx="143.8" ry="114.9" fill="url(#gOlive)" stroke="#a8d888" stroke-width="1.2" stroke-dasharray="5 2"/>
<ellipse cx="1039.5" cy="400.2" rx="143.8" ry="114.9" fill="url(#gOliveH)"/>
<g clip-path="url(#cOlive)"><rect x="934" y="398" width="216" height="120" fill="url(#gFront)"/></g>
<ellipse cx="1039.5" cy="398.5" rx="117.3" ry="93.3" fill="#a58282"/>
<ellipse cx="1040" cy="397.8" rx="102" ry="81.2" fill="url(#gInner)"/>
<g clip-path="url(#cInner)"><rect x="1037" y="416" width="96" height="80" fill="url(#gPurp)"/></g>
<ellipse cx="1085" cy="416" rx="48" ry="39" fill="url(#gPurp)" stroke="#8ab4c8" stroke-width="1" stroke-dasharray="1.5 3"/>
<g stroke-linecap="butt">
<path d="M1125.8 437.1 L1160.9 457.9 L1163.1 454.1 L1128.2 432.9Z" fill="#5aa844"/>
<path d="M1161.1 458.0 L1257.2 501.7 L1258.8 498.3 L1162.9 454.0Z" fill="#d49c72"/>
<path d="M1257.2 501.6 L1479.7 605.7 L1480.3 604.3 L1258.8 498.4Z" fill="#74c04e"/>
<line x1="1500" y1="614" x2="1527" y2="627" stroke="#7cc058" stroke-width="1.1" stroke-dasharray="3 2"/>
<line x1="1107" y1="677" x2="1192" y2="960" stroke="#86b062" stroke-width="2.3"/>
<line x1="1002" y1="828" x2="940" y2="845" stroke="#8cc068" stroke-width="1.8"/>
<line x1="940" y1="845" x2="866" y2="862" stroke="#8cc068" stroke-width="1.2" stroke-dasharray="3 2"/>
<line x1="932" y1="773" x2="993" y2="807" stroke="#8cc068" stroke-width="1.2" stroke-dasharray="2 2.5"/>
<line x1="933" y1="977" x2="1047" y2="793" stroke="#86b864" stroke-width="1.4" stroke-dasharray="14 1.5"/>
<line x1="1131" y1="866" x2="1165" y2="806" stroke="#8cc068" stroke-width="1.2" stroke-dasharray="3 3"/>
<line x1="1120" y1="955" x2="1218" y2="929" stroke="#8cc068" stroke-width="1.6" stroke-dasharray="30 2 4 2"/>
<line x1="1112" y1="998" x2="1201" y2="1051" stroke="#8cc068" stroke-width="1.6" stroke-dasharray="40 2 4 2"/>
<line x1="1098" y1="1029" x2="1119" y2="1112" stroke="#8cc068" stroke-width="1.4" stroke-dasharray="12 2 3 2"/>
</g>
</svg><!--/3D-->

<!-- right tabs -->
<svg class="a" style="left:477px;top:153px" width="205" height="35"><path d="M76.5 35 L76.5 11 Q77 4 84 3" fill="none" stroke="#a9a9a9" stroke-width="1.3"/><path d="M200.5 35 L200.5 11 Q201 4 208 3" fill="none" stroke="#a9a9a9" stroke-width="1.3"/><path d="M0 32.8 H205" stroke="#a9a9a9" stroke-width="1.2"/></svg>

<svg class="a" style="left:676px;top:153px" width="130" height="35"><path d="M1 35 L1 9 Q1 1 9 1 L64 1 Q72 1 79 7 L101 27 Q108 33 118 33.5 L124 35 Z" fill="url(#tabg)" stroke="#a9a9a9" stroke-width="1.4"/></svg>
<div class="t" style="left:482px;top:161.5px">Reports</div>
<div class="t" style="left:558px;top:161.5px">Cross Section</div>
<div class="t" style="left:682px;top:161.5px">3D View</div>


<!-- status bar -->
<div class="t" style="left:64.5px;top:1138px">Setting was updated</div>

<div class="a" style="left:1260px;top:1129px;width:244px;height:30px;border:1.5px solid #b5b5b5;border-bottom:none;background:#f0f0f0;box-shadow:inset 1px 1px 0 #fff"></div>
<div class="t" style="left:1262.5px;top:1138.8px">Lock State: OK</div>
<div class="a" style="left:1510.5px;top:1131px;width:53px;height:30px;border:1.5px solid #8c8c8c;border-radius:4px;background:linear-gradient(#f7f7f7,#e8e8e8 50%,#dcdcdc)"></div>
<div class="t" style="left:1519px;top:1136.5px;font-family:'Liberation Serif',serif;font-weight:bold;font-size:24px;transform:scaleX(.82);letter-spacing:.5px">0.00</div>
<div class="a" style="left:1570.5px;top:1129px;width:102px;height:30px;border:1.5px solid #b5b5b5;border-bottom:none;background:#fff"></div>
<div class="a" style="left:1640px;top:1131px;width:31px;height:28px;background:#ededed"></div>
<svg class="a" style="left:1650px;top:1142px" width="14" height="8"><path d="M1 1 L13 1 L7 7 Z" fill="#4a4a4a"/></svg>
<div class="t" style="left:1577px;top:1136px">Field</div>
<svg class="a" style="left:1679px;top:1130px" width="30" height="30"><defs><radialGradient id="hg" cx="35%" cy="30%" r="75%"><stop offset="0" stop-color="#8ec2ff"/><stop offset=".5" stop-color="#3a7fd6"/><stop offset="1" stop-color="#1c4fa8"/></radialGradient></defs><circle cx="14.3" cy="14.5" r="12.8" fill="url(#hg)" stroke="#2a5aa8" stroke-width="1"/><text x="14.3" y="21.5" font-family="Liberation Sans" font-weight="bold" font-size="19" fill="#f4f8ff" text-anchor="middle">?</text></svg>
<svg class="a" style="left:30px;top:1120px" width="1710" height="60"><path d="M10 0 H19 V36 H1691 V0 H1700 V24 Q1700 44 1680 44 H30 Q10 44 10 24 Z" fill="#1b202b"/></svg>
</body></html>
